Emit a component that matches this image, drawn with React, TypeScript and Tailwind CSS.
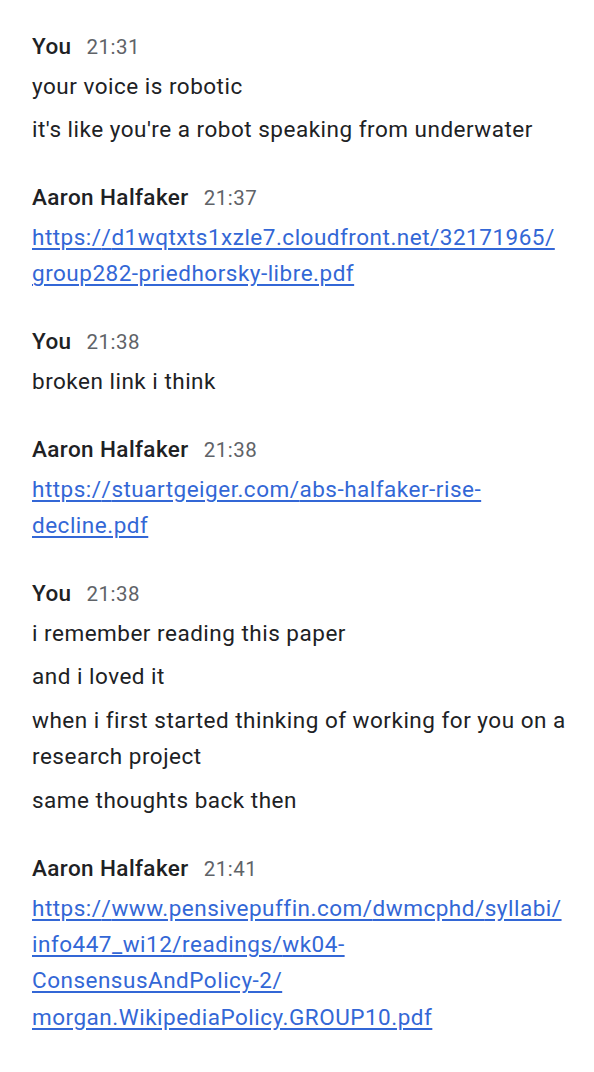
import React from "react";

type Msg = { text: string; link?: boolean };
type Group = { name: string; time: string; msgs: Msg[] };

const groups: Group[] = [
  {
    name: "You",
    time: "21:31",
    msgs: [
      { text: "your voice is robotic" },
      { text: "it's like you're a robot speaking from underwater" },
    ],
  },
  {
    name: "Aaron Halfaker",
    time: "21:37",
    msgs: [
      {
        text: "https://d1wqtxts1xzle7.cloudfront.net/32171965/group282-priedhorsky-libre.pdf",
        link: true,
      },
    ],
  },
  { name: "You", time: "21:38", msgs: [{ text: "broken link i think" }] },
  {
    name: "Aaron Halfaker",
    time: "21:38",
    msgs: [{ text: "https://stuartgeiger.com/abs-halfaker-rise-decline.pdf", link: true }],
  },
  {
    name: "You",
    time: "21:38",
    msgs: [
      { text: "i remember reading this paper" },
      { text: "and i loved it" },
      { text: "when i first started thinking of working for you on a research project" },
      { text: "same thoughts back then" },
    ],
  },
  {
    name: "Aaron Halfaker",
    time: "21:41",
    msgs: [
      {
        text: "https://www.pensivepuffin.com/dwmcphd/syllabi/info447_wi12/readings/wk04-ConsensusAndPolicy-2/morgan.WikipediaPolicy.GROUP10.pdf",
        link: true,
      },
    ],
  },
];

function renderLink(text: string) {
  const parts = text.split(/(?<=\/)/);
  return parts.map((p, i) => (
    <React.Fragment key={i}>
      {p}
      <wbr />
    </React.Fragment>
  ));
}

export default function App() {
  return (
    <div
      className="min-h-screen bg-white pl-8 pr-6 pt-[28px] pb-10 text-[#202124]"
      style={{ fontFamily: "Roboto, 'Liberation Sans', sans-serif" }}
    >
      <div className="flex flex-col gap-[31.8px]">
        {groups.map((g, gi) => (
          <div key={gi} className="flex flex-col">
            <div className="flex items-baseline gap-[15px] leading-[36px]">
              <span className="text-[22.5px] font-medium tracking-[0.4px] text-[#202124]">
                {g.name}
              </span>
              <span className="text-[20.5px] tracking-[0.5px] text-[#5f6368]">{g.time}</span>
            </div>
            <div className="mt-[2.6px] flex flex-col gap-[7.4px]">
              {g.msgs.map((m, mi) =>
                m.link ? (
                  <a
                    key={mi}
                    href="#"
                    className="text-[22.5px] leading-[36.3px] tracking-[0.5px] text-[#3367d6] underline underline-offset-[3px] [overflow-wrap:anywhere]"
                  >
                    {renderLink(m.text)}
                  </a>
                ) : (
                  <p key={mi} className="text-[22.5px] leading-[36.3px] tracking-[0.5px]">
                    {m.text}
                  </p>
                )
              )}
            </div>
          </div>
        ))}
      </div>
    </div>
  );
}
